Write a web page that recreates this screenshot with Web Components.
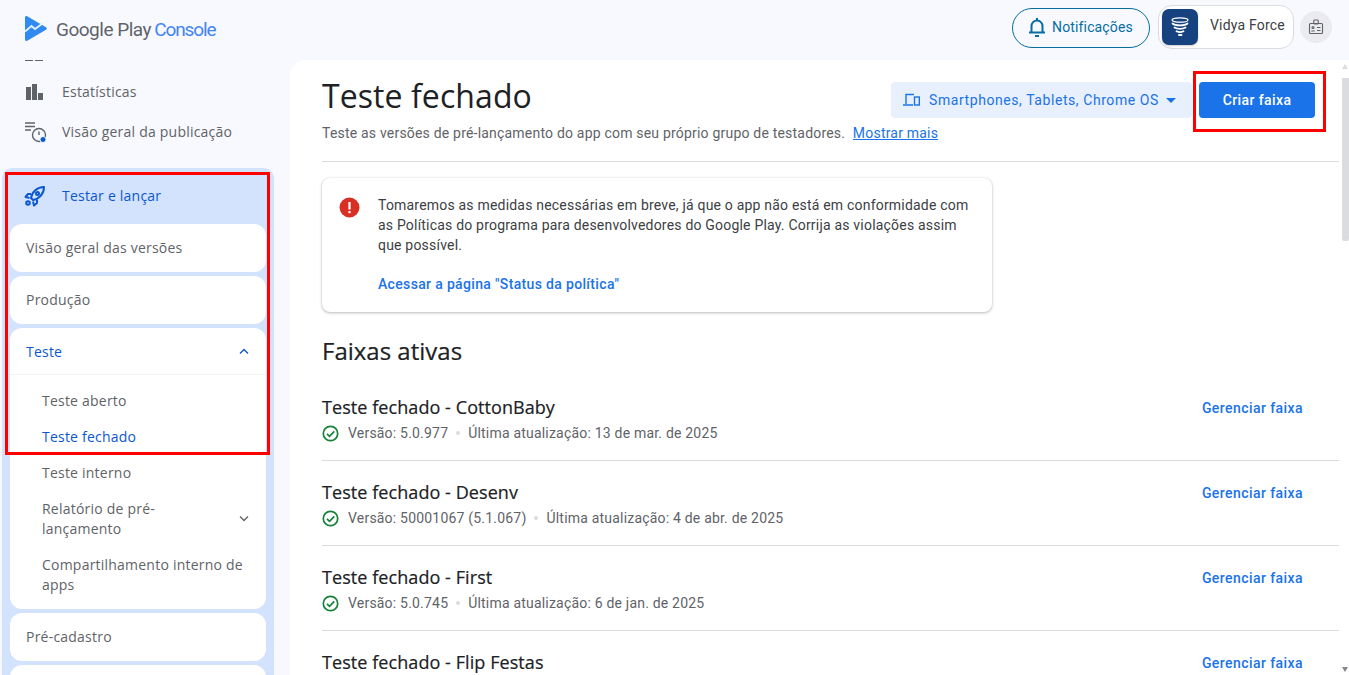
<!DOCTYPE html>
<html lang="pt-BR">
<head>
<meta charset="utf-8">
<title>Teste fechado</title>
<style>
  html,body{margin:0;height:100%;overflow:hidden;background:#f8f9ff}
  body{font-family:Roboto,"Liberation Sans",sans-serif}
</style>
</head>
<body>
<pc-app>
  <pc-header slot="header"></pc-header>
  <pc-sidebar slot="side"></pc-sidebar>
  <pc-main slot="main">
    <pc-alert></pc-alert>
    <h2 class="faixas">Faixas ativas</h2>
    <track-row name="Teste fechado - CottonBaby" version="5.0.977" date="13 de mar. de 2025"></track-row>
    <track-row name="Teste fechado - Desenv" version="50001067 (5.1.067)" date="4 de abr. de 2025"></track-row>
    <track-row name="Teste fechado - First" version="5.0.745" date="6 de jan. de 2025"></track-row>
    <track-row name="Teste fechado - Flip Festas"></track-row>
  </pc-main>
</pc-app>
<script>
  // small helper, every element just stamps its html in an open shadow root
  const define = (tag, html, setup) => {
    customElements.define(tag, class extends HTMLElement {
      constructor() { super(); this.attachShadow({ mode: "open" }); }
      connectedCallback() {
        this.shadowRoot.innerHTML = typeof html === "function" ? html(this) : html;
        if (setup) setup(this);
      }
    });
  };
  const SANS = `"Open Sans",Roboto,sans-serif`;

  define("pc-app", `
    <style>
      :host{display:grid;grid-template:60px 615px / 290px 1059px;width:1349px;height:675px;overflow:hidden}
      ::slotted([slot=header]){grid-column:1 / 3}
    </style>
    <slot name="header"></slot><slot name="side"></slot><slot name="main"></slot>`);

  define("pc-header", `
    <style>
      :host{display:flex;align-items:flex-start;height:60px;box-sizing:border-box;padding:8px 17px 0 25px;font-family:Roboto,sans-serif}
      .logo{display:flex;align-items:center;gap:9px;margin-top:7px;font-size:19px;letter-spacing:-.5px;color:#5f6368;white-space:nowrap}
      .logo span{padding-top:3px}
      .logo b{font-weight:400;color:#4285f4;margin-left:-1px;letter-spacing:-1.1px}
      .spacer{flex:1}
      .notif{display:flex;align-items:center;gap:5px;box-sizing:border-box;width:138px;height:40px;border:1px solid #056d9f;border-radius:20px;padding:0 0 2px 14px;color:#056d9f;font-size:14px;letter-spacing:.15px}
      .dev{display:flex;box-sizing:border-box;width:136px;height:44px;margin:-3px 0 0 8px;border:1px solid #dadce0;border-radius:14px;background:#fff;padding:3px;color:#3c4043;font-size:14px;letter-spacing:.2px}
      .dev .av{width:36px;height:36px;border-radius:7px;background:#16427f;display:flex;align-items:center;justify-content:center;box-shadow:0 1px 2px rgba(0,0,0,.2)}
      .dev span{margin:8px 0 0 12px}
      .badge{width:32px;height:32px;border-radius:50%;background:#ebebef;margin:3px 0 0 6px;display:flex;align-items:center;justify-content:center}
    </style>
    <div class="logo">
      <svg width="22" height="25" viewBox="0 0 22 25"><path d="M0 1.600C0 .4 1.200-.3 2.200.3L21 11.200c1 .6 1 2 0 2.600L2.200 24.700C1.200 25.300 0 24.600 0 23.400z" fill="#2f8bf0"/><path d="M0 15.500l6.500-5.500 3.500 3 7.500-5.500" fill="none" stroke="#e3f0ff" stroke-width="1.800"/></svg>
      <span>Google Play <b>Console</b></span>
    </div>
    <div class="spacer"></div>
    <div class="notif">
      <svg width="20" height="22" viewBox="0 0 20 22" fill="none" stroke="#056d9f" stroke-width="2"><path d="M2 16.500h16M4.500 16.500V10a5.500 5.500 0 0 1 11 0v6.500"/><path d="M10 2v2.500"/><path d="M8 20h4"/></svg>
      <span>Notificações</span>
    </div>
    <div class="dev">
      <div class="av"><svg width="18" height="21" viewBox="0 0 18 21" fill="none" stroke="#fff" stroke-linecap="round"><ellipse cx="9" cy="3" rx="8" ry="2.200" stroke-width="1.200"/><path d="M1.500 6.500c3 2.500 12 2.500 15 0" stroke-width="1.800"/><path d="M3.500 10.500c3 1.800 8 1.800 11 0" stroke-width="1.800"/><path d="M5.500 14.300c2 1 5 1 7 0" stroke-width="1.800"/><path d="M8 18h2.500" stroke-width="1.800"/></svg></div>
      <span>Vidya Force</span>
    </div>
    <div class="badge"><svg width="16" height="16" viewBox="0 0 16 16" fill="none" stroke="#5f6368" stroke-width="1.100"><rect x="1.500" y="4.500" width="13" height="10" rx="1"/><rect x="5.800" y="1" width="4.400" height="4" rx=".8"/><circle cx="5" cy="8.500" r="1"/><path d="M3.300 12h3.400M9 8.500h3.500M9 11.500h3.500"/></svg></div>`);

  define("pc-sidebar", `
    <style>
      :host{display:block;position:relative;height:615px;overflow:hidden;font-family:${SANS};font-size:14px;letter-spacing:.22px;color:#5f6368}
      .stub{display:block;margin:0 0 0 25px;height:12px}
      .plain{display:flex;align-items:center;height:40px;padding-left:26px}
      .plain span{margin-bottom:2px}
      .plain svg{flex:none;margin-right:16px}
      .group{margin:16px 0 0 2px;width:272px;box-sizing:border-box;background:#d3e3fd;border-radius:10px 10px 0 0;padding:0 8px 8px;display:flex;flex-direction:column;gap:4px}
      .ghead{display:flex;align-items:center;height:52px;box-sizing:border-box;padding:4px 0 0 14px;color:#0b57d0}
      .ghead span{margin-bottom:2px}
      .ghead svg{margin-right:16px}
      .red{position:absolute;left:5px;top:112px;width:259px;height:277px;border:3px solid #f00;pointer-events:none}
    </style>
    <svg class="stub" width="18" height="12" viewBox="0 0 18 12"><path d="M0 .5h8M10 .5h8" stroke="#5f6368" stroke-width="1"/></svg>
    <div class="plain">
      <svg width="20" height="16" viewBox="0 0 20 16" fill="#5f6368"><rect x="0" y="3" width="5" height="13"/><rect x="6" y="0" width="5" height="16"/><rect x="12" y="9" width="5" height="7"/></svg>
      <span>Estatísticas</span>
    </div>
    <div class="plain">
      <svg width="22" height="22" viewBox="0 0 22 22" fill="none" stroke="#5f6368" stroke-width="1.400" style="margin:0 15px 0 -1px"><path d="M0 2h10M0 5.500h10M0 9h6"/><circle cx="14" cy="14" r="6.500"/><path d="M14 10.500v3.500"/><circle cx="18" cy="18.500" r="3" fill="#0b57d0" stroke="#f8f9ff" stroke-width="1"/></svg>
      <span>Visão geral da publicação</span>
    </div>
    <div class="group">
      <div class="ghead">
        <svg width="22" height="22" viewBox="0 0 22 22" fill="none" stroke="#0b57d0" stroke-width="2" stroke-linejoin="round"><path d="M7 13C8 7 13 2 20 2c0 7-5 12-11 13z"/><path d="M7 9H4L1.500 12l4 1M13 15v3l-3 2.500-1-4"/><circle cx="13.500" cy="8.500" r="1.500"/><circle cx="4" cy="18" r="1.800"/></svg>
        <span>Testar e lançar</span>
      </div>
      <nav-card label="Visão geral das versões"></nav-card>
      <nav-card label="Produção"></nav-card>
      <nav-card label="Teste" open>
        <nav-sub>Teste aberto</nav-sub>
        <nav-sub active>Teste fechado</nav-sub>
        <nav-sub>Teste interno</nav-sub>
        <nav-sub chevron two>Relatório de pré-<br>lançamento</nav-sub>
        <nav-sub two>Compartilhamento interno de apps</nav-sub>
      </nav-card>
      <nav-card label="Pré-cadastro"></nav-card>
      <nav-card label=""></nav-card>
    </div>
    <div class="red"></div>`);

  define("nav-card", (el) => `
    <style>
      :host{display:block;background:#fff;border-radius:12px;overflow:hidden;flex:none}
      .top{display:flex;align-items:center;justify-content:space-between;height:48px;padding:0 17px 2px 16px;box-sizing:border-box;color:${el.hasAttribute("open") ? "#0b57d0" : "inherit"}}
      .open{border-bottom:1px solid #f3f4f6;height:47px;padding-bottom:0}
      .list{padding:8px 0 6px}
    </style>
    <div class="top ${el.hasAttribute("open") ? "open" : ""}">
      <span>${el.getAttribute("label")}</span>
      ${el.hasAttribute("open") ? `<svg width="10" height="7" viewBox="0 0 10 7" fill="none" stroke="#0b57d0" stroke-width="1.400"><path d="M1 5.500l4-4 4 4"/></svg>` : ""}
    </div>
    ${el.hasAttribute("open") ? `<div class="list"><slot></slot></div>` : ""}`);

  define("nav-sub", (el) => `
    <style>
      :host{display:flex;align-items:center;justify-content:space-between;min-height:36px;padding:0 17px 0 32px;line-height:20px;color:${el.hasAttribute("active") ? "#0b57d0" : "#5f6368"}}
      :host([two]){padding-top:8px;padding-bottom:8px}
      svg{flex:none;margin:0 0 2px 8px}
    </style>
    <span><slot></slot></span>
    ${el.hasAttribute("chevron") ? `<svg width="10" height="7" viewBox="0 0 10 7" fill="none" stroke="#5f6368" stroke-width="1.300"><path d="M1 1.500l4 4 4-4"/></svg>` : ""}`);

  define("pc-main", `
    <style>
      :host{display:block;position:relative;height:615px;overflow:hidden;background:#fff;border-radius:16px 0 0 0;box-sizing:border-box;padding:0 10px 0 32px;color:#202124}
      .head{display:flex;border-bottom:1px solid #dadce0;height:102px;box-sizing:border-box}
      .ttl{flex:1;min-width:0}
      h1{margin:15px 0 0;font:400 32px/42px ${SANS};letter-spacing:.08px;color:#202124}
      p{margin:6px 0 0;font-size:14px;line-height:20px;letter-spacing:.2px;color:#5f6368;white-space:nowrap}
      p a{color:#1a73e8;text-decoration:underline;margin-left:4px}
      .plat{display:flex;align-items:center;flex:none;box-sizing:border-box;width:301px;height:36px;margin:22px 7px 0 0;padding-left:12px;background:#e8f0fe;border-radius:4px;color:#1a73e8;font-size:14px;letter-spacing:.57px;white-space:nowrap}
      .plat svg:first-child{margin-right:9px}
      .plat svg:last-child{margin-left:7px}
      .cta{flex:none;width:116px;height:36px;margin:22px 24px 0 0;background:#1a73e8;border-radius:4px;color:#fff;font-size:14px;font-weight:500;letter-spacing:.4px;line-height:36px;text-align:center;position:relative}
      .cta::after{content:"";position:absolute;left:-6px;top:-11px;width:127px;height:55px;border:3px solid #f00}
      .scroll{position:absolute;right:0;top:0;width:8px;height:615px}
      .thumb{position:absolute;top:18px;left:1px;width:7px;height:163px;background:#dadce0;border-radius:0 0 2px 2px}
      .up,.dn{position:absolute;left:1px;width:0;height:0;border:3.500px solid transparent}
      .up{top:4px;border-bottom:5px solid #dadce0;border-top:0}
      .dn{bottom:3px;border-top:5px solid #80868b;border-bottom:0}
      .body ::slotted(h2){margin:23px 0 0;font:500 24px/32px ${SANS};letter-spacing:0;color:#202124;-webkit-text-stroke:.2px #202124}
    </style>
    <div class="head">
      <div class="ttl">
        <h1>Teste fechado</h1>
        <p>Teste as versões de pré-lançamento do app com seu próprio grupo de testadores. <a>Mostrar mais</a></p>
      </div>
      <div class="plat">
        <svg width="17" height="14" viewBox="0 0 17 14" fill="none" stroke="#1a73e8" stroke-width="1.400"><path d="M3 11V1.500h8M0 12h10"/><rect x="11.500" y="4" width="4.800" height="8"/></svg>
        <span>Smartphones, Tablets, Chrome OS</span>
        <svg width="10" height="5" viewBox="0 0 10 5" fill="#1a73e8"><path d="M0 0h10L5 5z"/></svg>
      </div>
      <div class="cta">Criar faixa</div>
    </div>
    <div class="body"><slot></slot></div>
    <div class="scroll"><div class="up"></div><div class="thumb"></div><div class="dn"></div></div>`);

  define("pc-alert", `
    <style>
      :host{display:flex;width:670px;height:134px;box-sizing:border-box;margin-top:16px;padding:17px 16px 0 17px;border-radius:8px;background:#fff;box-shadow:0 1px 3px rgba(60,64,67,.35),0 0 1px rgba(60,64,67,.2);font-size:14px;line-height:20px;letter-spacing:.2px;color:#3c4043}
      svg{flex:none;margin:2px 18px 0 0}
      a{display:block;margin-top:19px;color:#1a73e8;font-weight:500;letter-spacing:.34px}
    </style>
    <svg width="21" height="21" viewBox="0 0 21 21"><circle cx="10.500" cy="10.500" r="10" fill="#d93025"/><rect x="9.400" y="5" width="2.200" height="7.500" fill="#fff"/><rect x="9.400" y="14" width="2.200" height="2.200" fill="#fff"/></svg>
    <div>Tomaremos as medidas necessárias em breve, já que o app não está em conformidade com as Políticas do programa para desenvolvedores do Google Play. Corrija as violações assim que possível.<a>Acessar a página "Status da política"</a></div>`);

  define("track-row", (el) => `
    <style>
      :host{display:block;height:85px;box-sizing:border-box;border-bottom:1px solid #dadce0;position:relative;padding-top:19px}
      :host(.first){margin-top:9px}
      .n{font:500 18px/24px ${SANS};letter-spacing:.07px;color:#202124;-webkit-text-stroke:.2px #202124}
      .s{display:flex;align-items:center;margin-top:4px;font-size:14px;line-height:20px;letter-spacing:.2px;color:#5f6368}
      .s svg{margin-right:9px}
      .dot{width:4px;height:4px;border-radius:50%;background:#dadce0;margin:0 8px}
      a{position:absolute;right:36px;top:22px;color:#1a73e8;font-size:14px;line-height:20px;font-weight:500;letter-spacing:.43px}
    </style>
    <div class="n">${el.getAttribute("name")}</div>
    ${el.hasAttribute("version") ? `<div class="s">
      <svg width="17" height="17" viewBox="0 0 17 17" fill="none" stroke="#188038" stroke-width="1.700"><circle cx="8.500" cy="8.500" r="7.200"/><path d="M5 8.800l2.500 2.500 4.800-5"/></svg>
      <span>Versão: ${el.getAttribute("version")}</span><i class="dot"></i><span>Última atualização: ${el.getAttribute("date")}</span>
    </div>` : ""}
    <a>Gerenciar faixa</a>`);
  document.querySelector("track-row").classList.add("first");
</script>
</body>
</html>
